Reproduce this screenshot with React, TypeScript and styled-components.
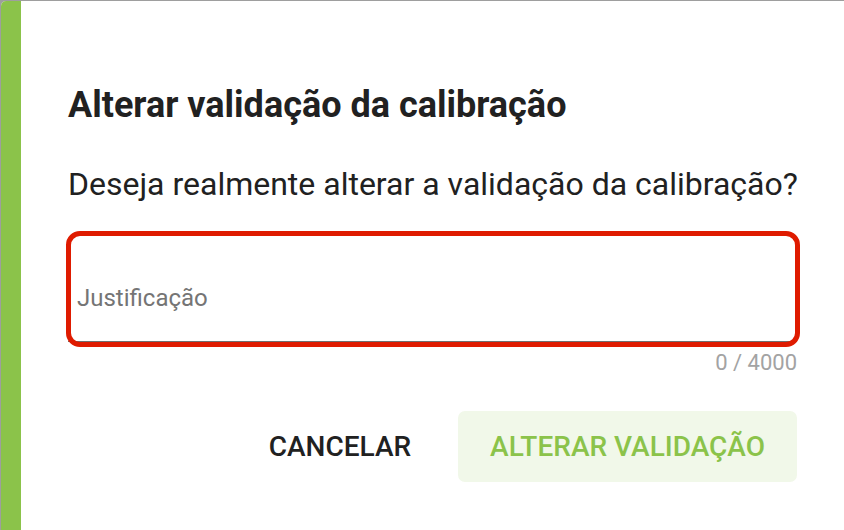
import styled, { createGlobalStyle } from "styled-components";

const GlobalStyle = createGlobalStyle`
  html, body {
    margin: 0;
    padding: 0;
    background: #9e9e9e;
    font-family: Roboto, "Liberation Sans", sans-serif;
    overflow: hidden;
  }
`;

const App = () => {
  return (
    <>
      <GlobalStyle />
      <SBackdrop>
        <SDialog>
          <SAccent />
          <SContent>
            <STitle>Alterar validação da calibração</STitle>
            <SMessage>Deseja realmente alterar a validação da calibração?</SMessage>
            <SFieldWrap>
              <SField>
                <SLabel>Justificação</SLabel>
              </SField>
              <SFocusRing />
            </SFieldWrap>
            <SCounter>0 / 4000</SCounter>
            <SActions>
              <SButton>CANCELAR</SButton>
              <SButton $primary>ALTERAR VALIDAÇÃO</SButton>
            </SActions>
          </SContent>
        </SDialog>
      </SBackdrop>
    </>
  );
};

const SBackdrop = styled.div`
  width: 844px;
  height: 530px;
  padding: 1px 0 0 1px;
  box-sizing: border-box;
  background: #9e9e9e;
  overflow: hidden;
`;

const SDialog = styled.div`
  display: flex;
  width: 860px;
  height: 560px;
  background: #ffffff;
  border-radius: 5px;
  overflow: hidden;
`;

const SAccent = styled.div`
  width: 20px;
  flex-shrink: 0;
  background: #8bc34a;
`;

const SContent = styled.div`
  display: flex;
  flex-direction: column;
  width: 729px;
  padding: 80px 0 0 47px;
`;

const STitle = styled.h2`
  margin: 0;
  font-size: 36px;
  line-height: 48px;
  font-weight: 700;
  color: #212121;
  white-space: nowrap;
`;

const SMessage = styled.p`
  margin: 33px 0 0;
  font-size: 32px;
  line-height: 44px;
  font-weight: 400;
  color: #212121;
  white-space: nowrap;
`;

const SFieldWrap = styled.div`
  position: relative;
  margin-top: 27px;
`;

const SField = styled.div`
  display: flex;
  align-items: center;
  height: 109px;
  padding: 22px 0 0 9px;
  box-sizing: border-box;
  border-bottom: 1px solid #6f6f6f;
`;

const SLabel = styled.span`
  font-size: 24px;
  color: #757575;
`;

const SFocusRing = styled.div`
  position: absolute;
  top: -2px;
  left: -2px;
  right: -3px;
  bottom: -5px;
  border: 5px solid #df1b00;
  border-radius: 14px;
`;

const SCounter = styled.div`
  margin-top: 8px;
  text-align: right;
  font-size: 22px;
  line-height: 26px;
  color: #a3a3a3;
`;

const SActions = styled.div`
  display: flex;
  justify-content: flex-end;
  align-items: center;
  gap: 15px;
  margin-top: 35px;
`;

const SButton = styled.button<{ $primary?: boolean }>`
  height: 71px;
  padding: 0 32px;
  border: none;
  border-radius: 7px;
  background: ${(p) => (p.$primary ? "#f1f8e9" : "transparent")};
  color: ${(p) => (p.$primary ? "#8bc34a" : "#212121")};
  font-family: Roboto, "Liberation Sans", sans-serif;
  font-size: 28px;
  font-weight: 500;
  white-space: nowrap;
  cursor: pointer;
`;

export default App;
